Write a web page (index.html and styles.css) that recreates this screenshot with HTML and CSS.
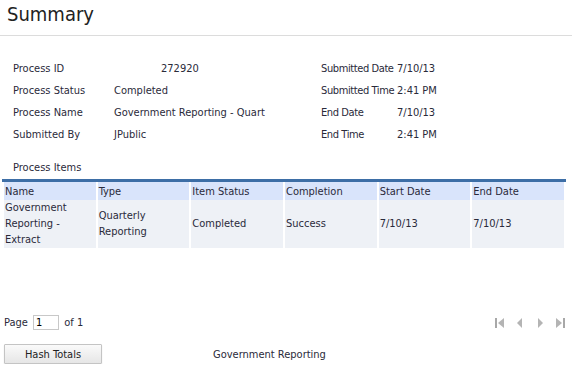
FILE: index.html
```html
<!DOCTYPE html>
<html lang="en">
<head>
    <meta charset="UTF-8">
    <title>Summary</title>
    <link rel="stylesheet" href="styles.css">
</head>
<body>
    <h1 class="title">Summary</h1>

    <div class="info">
        <div class="info-col">
            <div class="row"><span class="lbl">Process ID</span><span class="val val-id">272920</span></div>
            <div class="row"><span class="lbl">Process Status</span><span class="val">Completed</span></div>
            <div class="row"><span class="lbl">Process Name</span><span class="val">Government Reporting - Quart</span></div>
            <div class="row"><span class="lbl">Submitted By</span><span class="val">JPublic</span></div>
        </div>
        <div class="info-col right">
            <div class="row"><span class="lbl">Submitted Date</span><span class="val">7/10/13</span></div>
            <div class="row"><span class="lbl">Submitted Time</span><span class="val">2:41 PM</span></div>
            <div class="row"><span class="lbl">End Date</span><span class="val">7/10/13</span></div>
            <div class="row"><span class="lbl">End Time</span><span class="val">2:41 PM</span></div>
        </div>
    </div>

    <div class="section">Process Items</div>

    <table class="grid">
        <thead>
            <tr><th>Name</th><th>Type</th><th>Item Status</th><th>Completion</th><th>Start Date</th><th>End Date</th></tr>
        </thead>
        <tbody>
            <tr>
                <td>Government Reporting - Extract</td>
                <td>Quarterly Reporting</td>
                <td>Completed</td>
                <td>Success</td>
                <td>7/10/13</td>
                <td>7/10/13</td>
            </tr>
        </tbody>
    </table>

    <div class="pager">
        <div class="page">Page <input type="text" value="1" class="page-input"> of 1</div>
        <div class="nav">
            <svg width="12" height="12" viewBox="0 0 12 12"><rect x="1" y="1" width="2" height="10" fill="#a8a8a8"/><path d="M10 1 L4 6 L10 11 Z" fill="#b4b4b4"/></svg>
            <svg width="12" height="12" viewBox="0 0 12 12"><path d="M8 1 L3 6 L8 11 Z" fill="#b4b4b4"/></svg>
            <svg width="12" height="12" viewBox="0 0 12 12"><path d="M4 1 L9 6 L4 11 Z" fill="#b4b4b4"/></svg>
            <svg width="12" height="12" viewBox="0 0 12 12"><path d="M2 1 L8 6 L2 11 Z" fill="#b4b4b4"/><rect x="9" y="1" width="2" height="10" fill="#a8a8a8"/></svg>
        </div>
    </div>

    <div class="footer">
        <button class="btn">Hash Totals</button>
        <span class="foot-text">Government Reporting</span>
    </div>
</body>
</html>
```

FILE: styles.css
```css
body { margin: 0; font-family: "DejaVu Sans Condensed", "DejaVu Sans", sans-serif; font-size: 11px; color: #2a2a3a; background: #fff; }
.title { font-size: 20px; font-weight: normal; margin: 0; padding: 2px 7px 0; height: 33px; line-height: 24px; border-bottom: 1px solid #dcdcdc; color: #222; }
.info { display: flex; padding: 25px 0 0 13px; }
.info-col { width: 308px; }
.info-col.right { width: auto; }
.row { display: flex; height: 22px; line-height: 16px; white-space: nowrap; }
.lbl { width: 101px; flex-shrink: 0; }
.right .lbl { width: 76px; letter-spacing: -0.4px; }
.val-id { padding-left: 47px; }
.section { padding: 11px 0 0 13px; line-height: 16px; }
.grid { margin: 3px 0 0 2px; width: 564px; border-collapse: separate; border-spacing: 2px 0; border-top: 3px solid #3d6ea6; table-layout: fixed; }
.grid th { background: #d9e4fb; font-weight: normal; text-align: left; padding: 2px 1px 0; height: 16px; line-height: 16px; }
.grid td { background: #eef1f6; padding: 0 1px; height: 47px; line-height: 16px; }
.pager { display: flex; justify-content: space-between; align-items: center; margin-top: 67px; padding: 0 6px 0 4px; }
.page-input { width: 20px; height: 11px; padding: 1px 2px; border: 1px solid #c8c8c8; font: inherit; margin: 0 2px; }
.nav { display: flex; gap: 8px; }
.footer { display: flex; align-items: center; margin-top: 14px; padding-left: 4px; }
.btn { width: 98px; height: 20px; font: inherit; color: #222; background: linear-gradient(#fafafa, #e6e6e6); border: 1px solid #c4c4c4; border-radius: 1px; box-shadow: 0 1px 1px #ccc; padding: 0; }
.foot-text { margin-left: 111px; }
```
